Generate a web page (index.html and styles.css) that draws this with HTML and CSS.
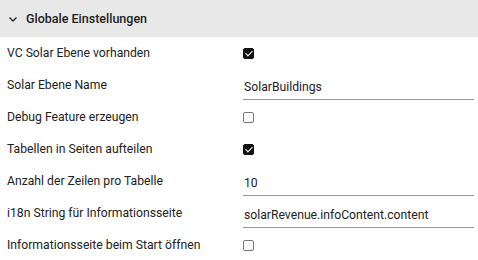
FILE: index.html
```html
<!DOCTYPE html>
<html lang="de">
<head>
    <meta charset="UTF-8">
    <title>Globale Einstellungen</title>
    <link rel="stylesheet" href="styles.css">
</head>
<body>
    <div class="panel">
        <div class="panel-header">
            <svg class="chevron" width="10" height="8" viewBox="0 0 10 8">
                <path d="M1.5 2.5 L5 6 L8.5 2.5" fill="none" stroke="#222" stroke-width="1.3"/>
            </svg>
            <span class="panel-title">Globale Einstellungen</span>
        </div>
        <div class="settings">
            <div class="row">
                <label>VC Solar Ebene vorhanden</label>
                <div class="value"><span class="check checked"></span></div>
            </div>
            <div class="row">
                <label>Solar Ebene Name</label>
                <div class="value"><input class="text" type="text" value="SolarBuildings"></div>
            </div>
            <div class="row">
                <label>Debug Feature erzeugen</label>
                <div class="value"><span class="check"></span></div>
            </div>
            <div class="row">
                <label>Tabellen in Seiten aufteilen</label>
                <div class="value"><span class="check checked"></span></div>
            </div>
            <div class="row">
                <label>Anzahl der Zeilen pro Tabelle</label>
                <div class="value"><input class="text" type="text" value="10"></div>
            </div>
            <div class="row">
                <label>i18n String für Informationsseite</label>
                <div class="value"><input class="text" type="text" value="solarRevenue.infoContent.content"></div>
            </div>
            <div class="row">
                <label>Informationsseite beim Start öffnen</label>
                <div class="value"><span class="check"></span></div>
            </div>
        </div>
    </div>
</body>
</html>
```

FILE: styles.css
```css
body {
    margin: 0;
    font-family: Roboto, "Liberation Sans", sans-serif;
    font-size: 12.2px;
    color: #222;
    background: #fff;
}
.panel-header {
    height: 37px;
    background: #e8e8e8;
    display: flex;
    align-items: center;
    padding-left: 8px;
}
.chevron {
    margin-right: 8px;
}
.panel-title {
    font-weight: 500;
    font-size: 12.5px;
}
.row {
    display: grid;
    grid-template-columns: 236px 1fr;
    height: 32px;
    align-items: center;
    padding-left: 7px;
}
.value {
    display: flex;
    align-items: center;
    padding-right: 4px;
}
.check {
    width: 11px;
    height: 11px;
    box-sizing: border-box;
    border: 1px solid #777;
    border-radius: 2px;
    position: relative;
}
.check.checked {
    background: #111;
    border-color: #111;
}
.check.checked::after {
    content: "";
    position: absolute;
    left: 3px;
    top: 0px;
    width: 3px;
    height: 6px;
    border: solid #fff;
    border-width: 0 1.5px 1.5px 0;
    transform: rotate(45deg);
}
.text {
    width: 100%;
    height: 25px;
    box-sizing: border-box;
    border: none;
    border-bottom: 1px solid #999;
    padding: 0 0 0 1px;
    font: inherit;
    color: #222;
    margin-top: 4px;
    outline: none;
}
```
